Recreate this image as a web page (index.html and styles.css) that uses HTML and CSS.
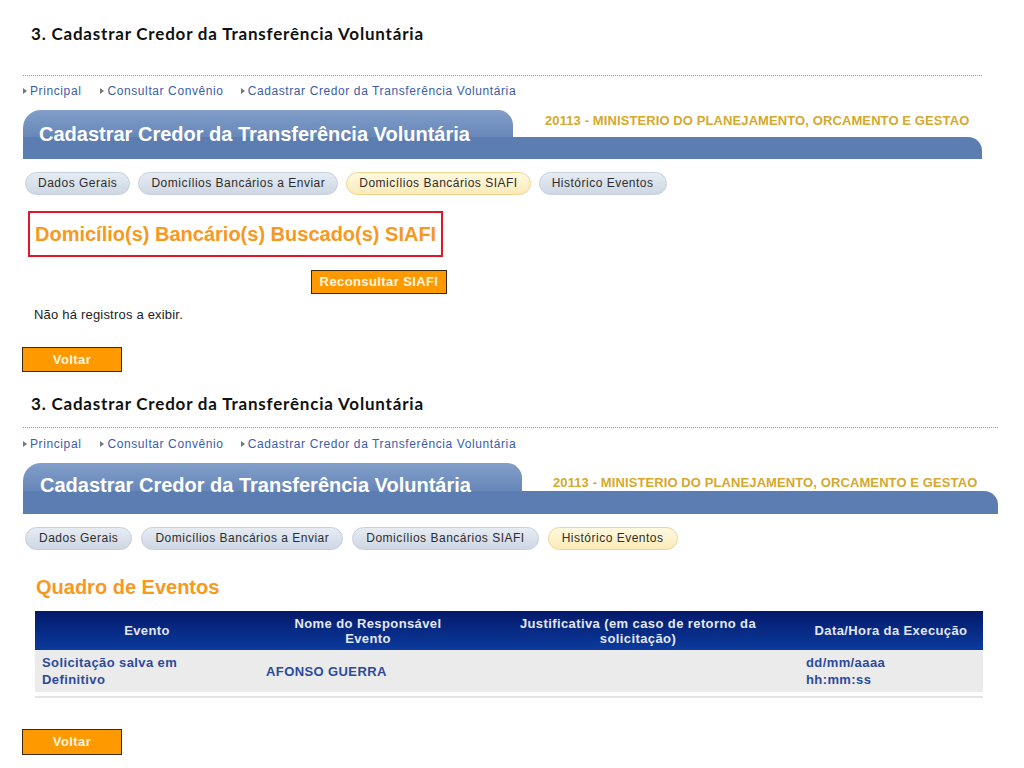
FILE: index.html
```html
<!DOCTYPE html>
<html lang="pt-BR">
<head>
<meta charset="utf-8">
<title>Cadastrar Credor da Transferência Voluntária</title>
<link rel="stylesheet" href="styles.css">
</head>
<body>
<section class="shot shot-1">
  <h2 class="step">3. Cadastrar Credor da Transferência Voluntária</h2>
  <div class="frame">
    <nav class="crumbs">
      <a class="crumb crumb-first">Principal</a>
      <a class="crumb crumb-wide">Consultar Convênio</a>
      <a class="crumb">Cadastrar Credor da Transferência Voluntária</a>
    </nav>
    <header class="pagehead">
      <div class="pagehead-top">
        <div class="pagetab"><h1 class="pagetitle">Cadastrar Credor da Transferência Voluntária</h1></div>
        <div class="orgao">20113 - MINISTERIO DO PLANEJAMENTO, ORCAMENTO E GESTAO</div>
      </div>
      <div class="pagebar"></div>
    </header>
    <ul class="tabs">
      <li class="tab">Dados Gerais</li>
      <li class="tab">Domicílios Bancários a Enviar</li>
      <li class="tab is-active">Domicílios Bancários SIAFI</li>
      <li class="tab">Histórico Eventos</li>
    </ul>
    <div class="found"><h2 class="found-title">Domicílio(s) Bancário(s) Buscado(s) SIAFI</h2></div>
    <button class="btn btn-reconsultar" type="button">Reconsultar SIAFI</button>
    <p class="empty">Não há registros a exibir.</p>
  </div>
  <button class="btn btn-voltar" type="button">Voltar</button>
</section>

<section class="shot shot-2">
  <h2 class="step">3. Cadastrar Credor da Transferência Voluntária</h2>
  <div class="frame">
    <nav class="crumbs">
      <a class="crumb crumb-first">Principal</a>
      <a class="crumb crumb-wide">Consultar Convênio</a>
      <a class="crumb">Cadastrar Credor da Transferência Voluntária</a>
    </nav>
    <header class="pagehead">
      <div class="pagehead-top">
        <div class="pagetab"><h1 class="pagetitle">Cadastrar Credor da Transferência Voluntária</h1></div>
        <div class="orgao">20113 - MINISTERIO DO PLANEJAMENTO, ORCAMENTO E GESTAO</div>
      </div>
      <div class="pagebar"></div>
    </header>
    <ul class="tabs">
      <li class="tab">Dados Gerais</li>
      <li class="tab">Domicílios Bancários a Enviar</li>
      <li class="tab">Domicílios Bancários SIAFI</li>
      <li class="tab is-active">Histórico Eventos</li>
    </ul>
    <h3 class="quadro">Quadro de Eventos</h3>
    <table class="eventos">
      <colgroup>
        <col class="c1"><col class="c2"><col class="c3"><col class="c4">
      </colgroup>
      <thead>
        <tr>
          <th>Evento</th>
          <th>Nome do Responsável<br>Evento</th>
          <th>Justificativa (em caso de retorno da<br>solicitação)</th>
          <th>Data/Hora da Execução</th>
        </tr>
      </thead>
      <tbody>
        <tr>
          <td>Solicitação salva em<br>Definitivo</td>
          <td>AFONSO GUERRA</td>
          <td></td>
          <td>dd/mm/aaaa<br>hh:mm:ss</td>
        </tr>
      </tbody>
    </table>
    <div class="eventos-end"></div>
  </div>
  <button class="btn btn-voltar" type="button">Voltar</button>
</section>
</body>
</html>
```

FILE: styles.css
```css
* { box-sizing: border-box; }
html, body { margin: 0; padding: 0; background: #fff; }
body {
  font-family: "Liberation Sans", Arial, sans-serif;
  color: #222;
  width: 1024px;
}

.shot-1 { padding-top: 24px; }

.step {
  margin: 0 0 0 31px;
  font: 700 17px/20px Lato, "DejaVu Sans", sans-serif;
  letter-spacing: 0.8px;
  color: #111;
}
.shot-2 .step { margin-top: 22px; }

.frame {
  margin: 31px 0 0 23px;
  width: 959px;
  border-top: 1px dotted #9a9a9a;
}
.shot-2 .frame { margin-top: 13px; width: 975px; }

/* breadcrumb */
.crumbs {
  margin-top: 7px;
  display: flex;
  gap: 9px;
  font-size: 12px;
  line-height: 16px;
  letter-spacing: 0.6px;
}
.shot-2 .crumbs { margin-top: 8px; }
.crumb {
  display: flex;
  align-items: center;
  gap: 3px;
  color: #3b5ca7;
  text-decoration: none;
}
.crumb::before {
  content: "";
  width: 0;
  height: 0;
  border-left: 4px solid #777;
  border-top: 3px solid transparent;
  border-bottom: 3px solid transparent;
}
.crumb-first { margin-right: 10px; }
.crumb-wide { margin-right: 8px; }

/* page header */
.pagehead { margin-top: 11px; }
.pagehead-top { display: flex; height: 27px; }
.shot-2 .pagehead-top { height: 28px; }
.pagetab {
  width: 490px;
  flex: none;
  border-radius: 18px 15px 0 0;
  background: linear-gradient(#829ec9, #6787b9);
}
.shot-2 .pagetab { width: 499px; }
.pagetitle {
  margin: 0;
  padding: 12px 0 0 16px;
  font: 700 20px/24px "Liberation Sans", Arial, sans-serif;
  color: #fff;
  white-space: nowrap;
}
.shot-2 .pagetitle { padding: 10px 0 0 17px; }
.orgao {
  margin-left: 32px;
  padding-top: 3px;
  font: 700 13px/16px "Liberation Sans", Arial, sans-serif;
  letter-spacing: 0.1px;
  color: #d6a82c;
  white-space: nowrap;
}
.shot-2 .orgao { margin-left: 31px; padding-top: 12px; }
.pagebar {
  height: 22px;
  background: #5c7db2;
  border-radius: 0 14px 0 0;
}
.shot-2 .pagebar { height: 23px; }

/* tabs */
.tabs {
  display: flex;
  gap: 8px;
  margin: 13px 0 0 2px;
  padding: 0;
  list-style: none;
}
.tab {
  height: 23px;
  padding: 0 12px;
  border-radius: 12px;
  border: 1px solid #c6d0dc;
  background: linear-gradient(#e7ecf3, #cdd7e3);
  font-size: 12px;
  line-height: 21px;
  letter-spacing: 0.5px;
  color: #2d2d2d;
  white-space: nowrap;
}
.shot-2 .tab { padding: 0 13px; }
.shot-2 .tabs { gap: 9px; }
.tab.is-active {
  background: linear-gradient(#fff9e0, #fcebb8);
  border-color: #efd590;
}

/* found box */
.found {
  display: table;
  margin: 16px 0 0 5px;
  border: 2px solid #e2162b;
  padding: 9px 5px 9px 5px;
}
.found-title {
  margin: 0;
  font: 700 20px/24px "Liberation Sans", Arial, sans-serif;
  color: #f7981f;
}

/* buttons */
.btn {
  display: block;
  height: 24px;
  padding: 0;
  background: #ff9900;
  border: 1px solid #3d2b0f;
  border-radius: 0;
  color: #fff6e0;
  font: 700 13px/22px "Liberation Sans", Arial, sans-serif;
  letter-spacing: 0.4px;
  text-align: center;
  white-space: nowrap;
}
.btn-reconsultar { margin: 13px 0 0 288px; width: 136px; }
.btn-voltar { width: 100px; height: 25px; margin: 24px 0 0 22px; }
.shot-2 .btn-voltar { height: 26px; margin-top: 31px; line-height: 24px; }

.empty {
  margin: 13px 0 0 11px;
  font-size: 13px;
  line-height: 16px;
  letter-spacing: 0.2px;
  color: #222;
}

/* events */
.quadro {
  margin: 26px 0 0 13px;
  font: 700 20px/22px "Liberation Sans", Arial, sans-serif;
  color: #f7981f;
}
.eventos {
  margin: 13px 0 0 12px;
  width: 948px;
  border-collapse: collapse;
  table-layout: fixed;
  font: 700 13px/16px "Liberation Sans", Arial, sans-serif;
  letter-spacing: 0.4px;
}
.c1 { width: 224px; }
.c2 { width: 218px; }
.c3 { width: 322px; }
.c4 { width: 184px; }
.eventos th {
  height: 39px;
  padding: 0 4px;
  background: linear-gradient(#04196a, #0b3b9d);
  color: #e4e8f2;
  font-weight: 700;
  line-height: 15px;
  text-align: center;
  vertical-align: middle;
}
.eventos td {
  height: 42px;
  padding: 0 4px 0 7px;
  background: #ebebeb;
  color: #2b4a9b;
  line-height: 17px;
  vertical-align: middle;
}
.eventos-end {
  margin: 4px 0 0 12px;
  width: 948px;
  height: 2px;
  background: #e3e3e3;
}
```
